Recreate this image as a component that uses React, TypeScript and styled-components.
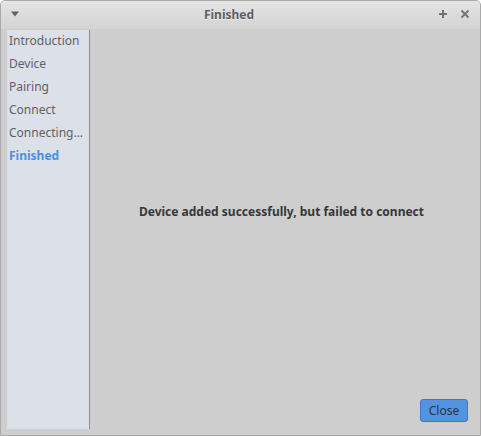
import React from 'react';
import styled, { createGlobalStyle } from 'styled-components';

const GlobalStyle = createGlobalStyle`
  html, body {
    margin: 0;
    padding: 0;
    background: #ffffff;
  }
  body {
    font-family: "Noto Sans", "DejaVu Sans", sans-serif;
  }
`;

const Window = styled.div`
  width: 481px;
  height: 436px;
  box-sizing: border-box;
  border: 1px solid #a9a9a9;
  border-radius: 5px 5px 0 0;
  background: #cecece;
  display: flex;
  flex-direction: column;
  overflow: hidden;
`;

const TitleBar = styled.div`
  height: 28px;
  flex: none;
  display: flex;
  align-items: center;
  padding: 0 5px 3px 4px;
  box-sizing: border-box;
  background: linear-gradient(to bottom, #e4e4e4, #d3d3d3);
  position: relative;
`;

const Title = styled.div`
  position: absolute;
  left: 0;
  right: 23px;
  top: 5px;
  text-align: center;
  font-weight: 700;
  font-size: 12px;
  color: #5d5f66;
  text-shadow: 0 1px rgba(255, 255, 255, 0.5);
  pointer-events: none;
`;

const TitleButtons = styled.div`
  display: flex;
  gap: 2px;
`;

const TitleButton = styled.button`
  width: 20px;
  height: 20px;
  padding: 0;
  border: none;
  background: transparent;
  display: flex;
  align-items: center;
  justify-content: center;
`;

const Spacer = styled.div`
  flex: 1;
`;

const Body = styled.div`
  flex: 1;
  display: flex;
  padding: 1px 0 6px 6px;
`;

const Sidebar = styled.nav`
  width: 82px;
  background: #dce0e8;
  border-right: 1px solid #8e8e8e;
  display: flex;
  flex-direction: column;
  padding-top: 1px;
`;

const Step = styled.div<{ $active?: boolean }>`
  height: 23px;
  line-height: 20px;
  padding-left: 2px;
  font-size: 12px;
  white-space: nowrap;
  color: ${p => (p.$active ? '#4a90e2' : '#5f6166')};
  font-weight: ${p => (p.$active ? 700 : 400)};
`;

const Content = styled.main`
  flex: 1;
  display: flex;
  flex-direction: column;
`;

const Message = styled.div`
  flex: 1;
  display: flex;
  align-items: center;
  justify-content: center;
  padding: 0 7px 7px 0;
  font-size: 12px;
  font-weight: 700;
  color: #36373b;
`;

const Footer = styled.div`
  display: flex;
  justify-content: flex-end;
  padding: 0 12px 7px 0;
`;

const CloseButton = styled.button`
  width: 48px;
  height: 23px;
  box-sizing: border-box;
  border: 1px solid #3d78c4;
  border-radius: 3px;
  background: #5294e2;
  color: #2c3340;
  font-family: "Noto Sans", "DejaVu Sans", sans-serif;
  font-size: 12px;
  padding: 0;
`;

const steps = ['Introduction', 'Device', 'Pairing', 'Connect', 'Connecting...', 'Finished'];

export default function App() {
  return (
    <>
      <GlobalStyle />
      <Window>
        <TitleBar>
          <TitleButton>
            <svg width="10" height="6" viewBox="0 0 10 6">
              <path d="M1 0.5 L9 0.5 L5 5.5 Z" fill="#606166" />
            </svg>
          </TitleButton>
          <Title>Finished</Title>
          <Spacer />
          <TitleButtons>
            <TitleButton>
              <svg width="10" height="10" viewBox="0 0 10 10">
                <path d="M5 1 V9 M1 5 H9" stroke="#707176" strokeWidth="2" />
              </svg>
            </TitleButton>
            <TitleButton>
              <svg width="10" height="10" viewBox="0 0 10 10">
                <path d="M1.5 1.5 L8.5 8.5 M8.5 1.5 L1.5 8.5" stroke="#707176" strokeWidth="1.8" />
              </svg>
            </TitleButton>
          </TitleButtons>
        </TitleBar>
        <Body>
          <Sidebar>
            {steps.map(s => (
              <Step key={s} $active={s === 'Finished'}>
                {s}
              </Step>
            ))}
          </Sidebar>
          <Content>
            <Message>Device added successfully, but failed to connect</Message>
            <Footer>
              <CloseButton>Close</CloseButton>
            </Footer>
          </Content>
        </Body>
      </Window>
    </>
  );
}
